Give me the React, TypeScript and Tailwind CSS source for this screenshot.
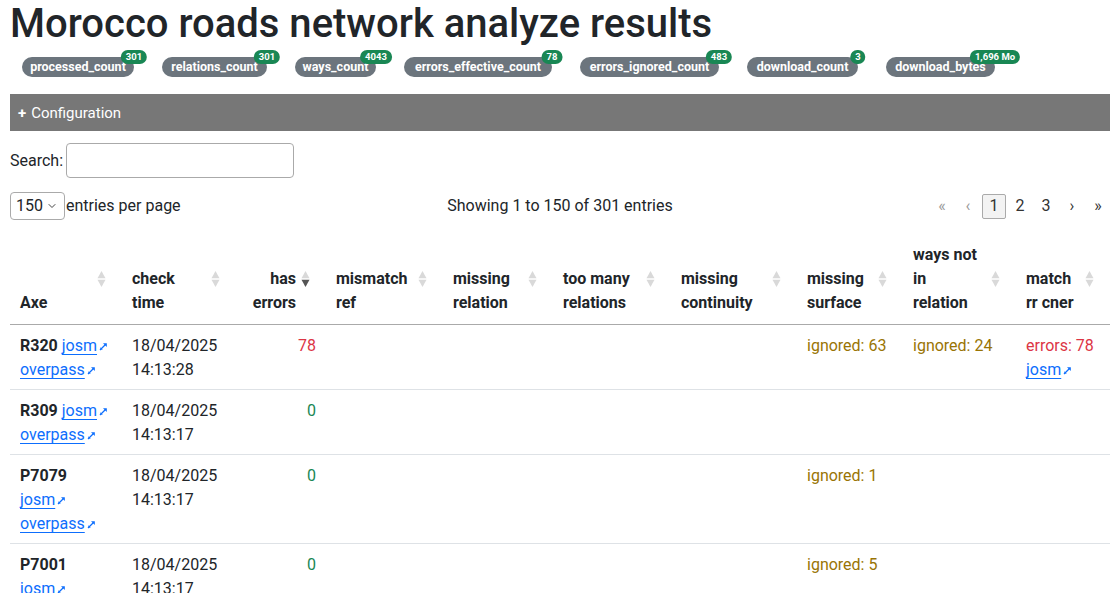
import { ChevronDown } from "lucide-react"

const counters = [
  { name: "processed_count", value: "301", width: "w-[112px]" },
  { name: "relations_count", value: "301", width: "w-[105px]" },
  { name: "ways_count", value: "4043", width: "w-[81px]" },
  { name: "errors_effective_count", value: "78", width: "w-[148px]" },
  { name: "errors_ignored_count", value: "483", width: "w-[139px]" },
  { name: "download_count", value: "3", width: "w-[111px]" },
  { name: "download_bytes", value: "1,696 Mo", width: "w-[109px]" },
]

const columns = [
  { label: ["Axe"], width: "w-[112px]" },
  { label: ["check", "time"], width: "w-[114px]" },
  { label: ["has", "errors"], width: "w-[90px]", right: true, sorted: true },
  { label: ["mismatch", "ref"], width: "w-[117px]" },
  { label: ["missing", "relation"], width: "w-[110px]" },
  { label: ["too many", "relations"], width: "w-[118px]" },
  { label: ["missing", "continuity"], width: "w-[126px]" },
  { label: ["missing", "surface"], width: "w-[106px]" },
  { label: ["ways not", "in", "relation"], width: "w-[113px]" },
  { label: ["match", "rr cner"], width: "w-[94px]" },
]

type Row = {
  axe: string
  split: boolean
  date: string
  time: string
  errors: number
  surface?: string
  ways?: string
  match?: string
}

const rows: Row[] = [
  { axe: "R320", split: false, date: "18/04/2025", time: "14:13:28", errors: 78, surface: "ignored: 63", ways: "ignored: 24", match: "errors: 78" },
  { axe: "R309", split: false, date: "18/04/2025", time: "14:13:17", errors: 0 },
  { axe: "P7079", split: true, date: "18/04/2025", time: "14:13:17", errors: 0, surface: "ignored: 1" },
  { axe: "P7001", split: true, date: "18/04/2025", time: "14:13:17", errors: 0, surface: "ignored: 5" },
]

function ExtLink({ children }: { children: string }) {
  return (
    <a href="#" className="text-[#0d6efd] underline underline-offset-[3px]">
      {children}
      <svg width="9" height="9" viewBox="0 0 9 9" className="ml-[2px] inline-block align-baseline">
        <path d="M1 8 L6.5 2.5" stroke="currentColor" strokeWidth="1.3" />
        <path d="M4 1.2 H7.8 V5 Z" fill="currentColor" />
        <path d="M1 6 L2.5 6.5 L3 8" stroke="currentColor" strokeWidth="0.9" fill="none" />
      </svg>
    </a>
  )
}

function SortIcon({ active }: { active?: boolean }) {
  return (
    <svg width="9" height="18" viewBox="0 0 9 18" className="absolute right-[16px] top-1/2 -translate-y-1/2">
      <path d="M4.5 1 L8.5 8.3 H0.5 Z" fill="#d9d9d9" />
      <path d="M0.5 9.7 H8.5 L4.5 17 Z" fill={active ? "#555" : "#d9d9d9"} />
    </svg>
  )
}

const cell = "border-b border-[#dee2e6] px-[10px] pt-[9px] pb-[7px] align-top"

export default function App() {
  return (
    <div className="min-h-screen bg-white px-[10px] font-[family-name:Roboto,sans-serif] text-[16px] leading-6 text-[#212529]">
      <h1 className="text-[40px] font-medium leading-[48px]">Morocco roads network analyze results</h1>

      <div className="mt-[9px] flex items-start gap-7 pl-3">
        {counters.map((c) => (
          <span
            key={c.name}
            className={
              "relative inline-flex h-5 items-center justify-center rounded-full bg-[#6c757d] text-[12.5px] font-bold leading-none whitespace-nowrap text-white " +
              c.width
            }
          >
            {c.name}
            <span className="absolute left-full top-0 flex h-[14px] -translate-x-1/2 -translate-y-1/2 items-center rounded-full bg-[#198754] px-[5px] text-[9.5px] font-bold leading-none whitespace-nowrap text-white">
              {c.value}
            </span>
          </span>
        ))}
      </div>

      <div className="mt-[17px] flex h-[37px] items-center bg-[#777777] px-2 text-[15px] text-white">
        <span className="mr-[5px] font-bold">+</span>Configuration
      </div>

      <div className="mt-3 flex items-center gap-[3px]">
        <label>Search:</label>
        <div className="h-[35px] w-[228px] rounded-[4px] border border-[#aaa]" />
      </div>

      <div className="mt-[13px] grid grid-cols-3 items-center pt-[1px]">
        <div className="flex items-center gap-[1px]">
          <div className="flex h-7 w-[55px] items-center justify-between rounded-[4px] border border-[#aaa] pl-[5px] pr-[6px]">
            <span>150</span>
            <ChevronDown className="h-3 w-3 text-[#444]" strokeWidth={2} />
          </div>
          <span>entries per page</span>
        </div>
        <div className="text-center">Showing 1 to 150 of 301 entries</div>
        <div className="flex justify-end gap-[2px] text-[#333]">
          {["«", "‹", "1", "2", "3", "›", "»"].map((p, i) => (
            <span
              key={p}
              className={
                "flex h-[25px] w-6 items-center justify-center rounded-[2px] " +
                (i < 2 ? "text-[#999]" : "") +
                (p === "1" ? " border border-[#aaa] bg-[#f3f3f3]" : "")
              }
            >
              {p}
            </span>
          ))}
        </div>
      </div>

      <table className="mt-[14px] w-full table-fixed border-collapse">
        <colgroup>
          {columns.map((c, i) => (
            <col key={i} className={c.width} />
          ))}
        </colgroup>
        <thead>
          <tr>
            {columns.map((c, i) => (
              <th
                key={i}
                className={
                  "relative whitespace-nowrap border-b border-[#aaa] pt-[9px] pb-[9px] pl-[10px] pr-[30px] align-bottom font-bold " +
                  (c.right ? "text-right" : "text-left")
                }
              >
                {c.label.map((l, j) => (
                  <div key={j}>{l}</div>
                ))}
                <SortIcon active={c.sorted} />
              </th>
            ))}
          </tr>
        </thead>
        <tbody>
          {rows.map((r) => (
            <tr key={r.axe}>
              <td className={cell}>
                <b>{r.axe}</b>
                {r.split ? <br /> : " "}
                <ExtLink>josm</ExtLink>
                <br />
                <ExtLink>overpass</ExtLink>
              </td>
              <td className={cell}>
                {r.date}
                <br />
                {r.time}
              </td>
              <td className={cell + " text-right " + (r.errors > 0 ? "text-[#dc3545]" : "text-[#198754]")}>
                {r.errors}
              </td>
              <td className={cell} />
              <td className={cell} />
              <td className={cell} />
              <td className={cell} />
              <td className={cell + " text-[#997404]"}>{r.surface}</td>
              <td className={cell + " text-[#997404]"}>{r.ways}</td>
              <td className={cell}>
                {r.match && (
                  <>
                    <span className="text-[#dc3545]">{r.match}</span>
                    <br />
                    <ExtLink>josm</ExtLink>
                  </>
                )}
              </td>
            </tr>
          ))}
        </tbody>
      </table>
    </div>
  )
}
